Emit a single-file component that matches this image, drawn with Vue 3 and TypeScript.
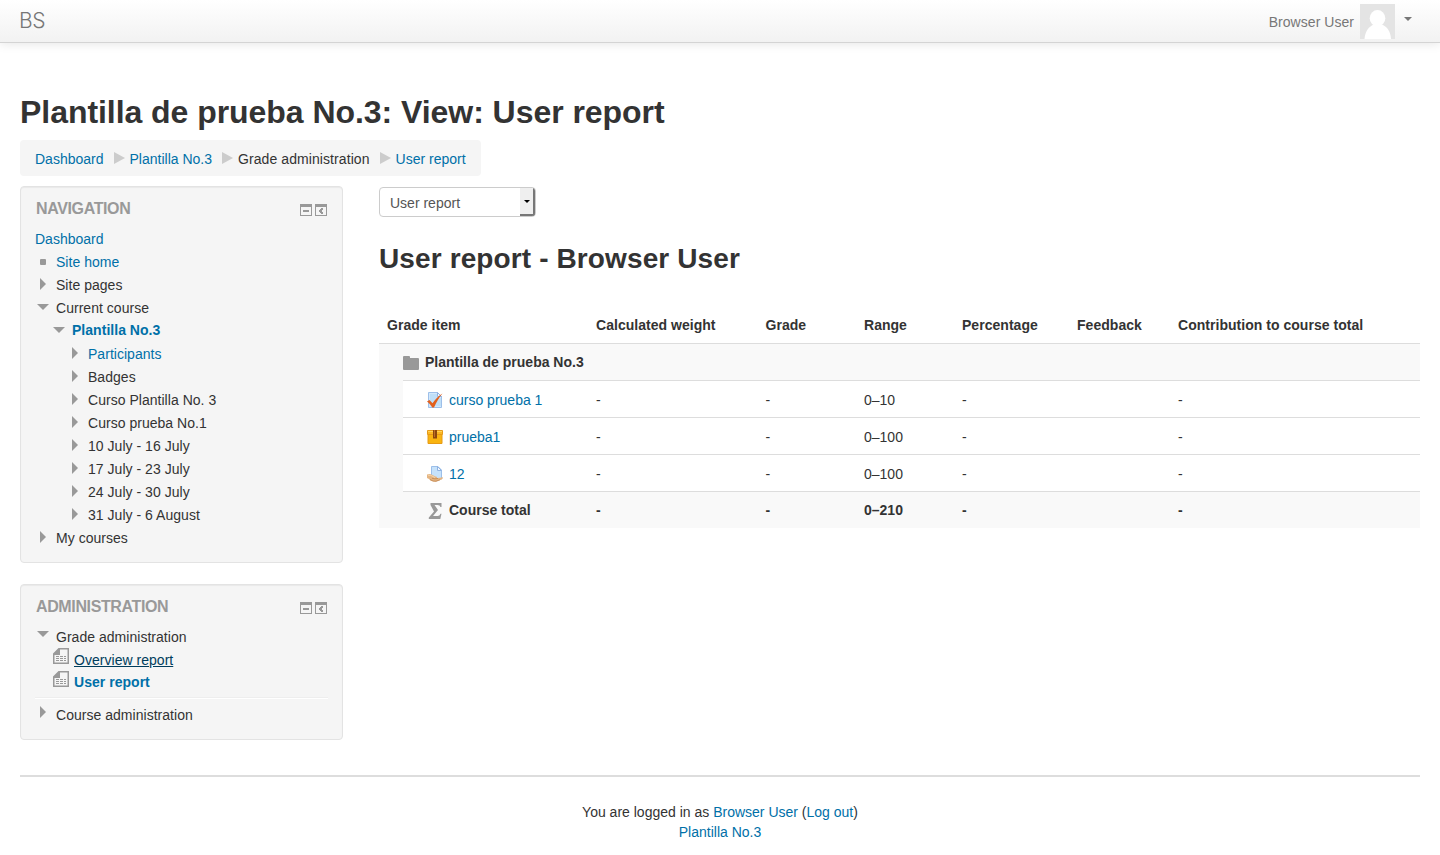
<script setup lang="ts">
type Marker = 'square' | 'closed' | 'open'

interface NavItem {
  label: string
  depth: number
  marker: Marker
  link?: boolean
  bold?: boolean
}

interface GradeRow {
  label: string
  icon: 'quiz' | 'package' | 'assign' | 'sum'
  range: string
  total?: boolean
}

const navItems: NavItem[] = [
  { label: 'Site home', depth: 0, marker: 'square', link: true },
  { label: 'Site pages', depth: 0, marker: 'closed' },
  { label: 'Current course', depth: 0, marker: 'open' },
  { label: 'Plantilla No.3', depth: 1, marker: 'open', link: true, bold: true },
  { label: 'Participants', depth: 2, marker: 'closed', link: true },
  { label: 'Badges', depth: 2, marker: 'closed' },
  { label: 'Curso Plantilla No. 3', depth: 2, marker: 'closed' },
  { label: 'Curso prueba No.1', depth: 2, marker: 'closed' },
  { label: '10 July - 16 July', depth: 2, marker: 'closed' },
  { label: '17 July - 23 July', depth: 2, marker: 'closed' },
  { label: '24 July - 30 July', depth: 2, marker: 'closed' },
  { label: '31 July - 6 August', depth: 2, marker: 'closed' },
  { label: 'My courses', depth: 0, marker: 'closed' },
]

const columns = ['Grade item', 'Calculated weight', 'Grade', 'Range', 'Percentage', 'Feedback', 'Contribution to course total']

const rows: GradeRow[] = [
  { label: 'curso prueba 1', icon: 'quiz', range: '0–10' },
  { label: 'prueba1', icon: 'package', range: '0–100' },
  { label: '12', icon: 'assign', range: '0–100' },
  { label: 'Course total', icon: 'sum', range: '0–210', total: true },
]
</script>

<template>
  <div class="page">
    <header class="navbar">
      <a class="brand">BS</a>
      <div class="user">
        <span class="user-name">Browser User</span>
        <svg class="avatar" width="35" height="35" viewBox="0 0 35 35">
          <rect width="35" height="35" fill="#e4e4e4" />
          <ellipse cx="17.5" cy="14.2" rx="7.8" ry="8.2" fill="#fff" />
          <path d="M4.500 35C5 27 9 22.500 14 20.500h7.500C27 22.500 30.500 27 31 35z" fill="#fff" />
        </svg>
        <i class="caret"></i>
      </div>
    </header>

    <h1>Plantilla de prueba No.3: View: User report</h1>

    <nav class="breadcrumb">
      <a>Dashboard</a><i class="sep"></i><a>Plantilla No.3</a><i class="sep"></i><span class="crumb-text">Grade administration</span><i class="sep"></i><a>User report</a>
    </nav>

    <div class="content">
      <aside>
        <section class="block block-nav">
          <div class="block-head">
            <h2>Navigation</h2>
            <svg width="27" height="12" viewBox="0 0 27 12" shape-rendering="crispEdges">
              <g fill="#999">
                <path d="M0 0h12v12H0zM1 3v8h10V3z" fill-rule="evenodd" />
                <path d="M3 6h6v2H3z" />
                <path d="M15 0h12v12H15zM16 3v8h10V3z" fill-rule="evenodd" />
                <path d="M19 6h1V5h1V4h2v2h-1v2h1v2h-2V9h-1V8h-1z" />
              </g>
            </svg>
          </div>
          <a class="root">Dashboard</a>
          <div v-for="item in navItems" :key="item.label" class="item" :class="['d' + item.depth, { bold: item.bold }]">
            <span class="marker"><i :class="item.marker"></i></span>
            <a v-if="item.link">{{ item.label }}</a>
            <span v-else>{{ item.label }}</span>
          </div>
        </section>

        <section class="block block-admin">
          <div class="block-head">
            <h2>Administration</h2>
            <svg width="27" height="12" viewBox="0 0 27 12" shape-rendering="crispEdges">
              <g fill="#999">
                <path d="M0 0h12v12H0zM1 3v8h10V3z" fill-rule="evenodd" />
                <path d="M3 6h6v2H3z" />
                <path d="M15 0h12v12H15zM16 3v8h10V3z" fill-rule="evenodd" />
                <path d="M19 6h1V5h1V4h2v2h-1v2h1v2h-2V9h-1V8h-1z" />
              </g>
            </svg>
          </div>
          <div class="item d0 raised">
            <span class="marker"><i class="open"></i></span>
            <span>Grade administration</span>
          </div>
          <div v-for="(name, i) in ['Overview report', 'User report']" :key="name" class="item report" :class="{ bold: i === 1 }">
            <svg width="16" height="16" viewBox="0 0 16 16">
              <path d="M5.500 0H16v16H0V5.500zM7 1.500V7H1.500v7.500h13v-13z" fill="#999" fill-rule="evenodd" />
              <path d="M3 8h3v1H3zM7 8h3v1H7zM11 8h2v1h-2zM3 10h3v1H3zM7 10h3v1H7zM11 10h2v1h-2zM3 12h3v1H3zM7 12h3v1H7zM11 12h2v1h-2z" fill="#999" />
            </svg>
            <a :class="{ hovered: i === 0 }">{{ name }}</a>
          </div>
          <hr />
          <div class="item d0 raised">
            <span class="marker"><i class="closed"></i></span>
            <span>Course administration</span>
          </div>
        </section>
      </aside>

      <main>
        <div class="select">
          <span>User report</span>
          <b><i></i></b>
        </div>
        <h2 class="title">User report - Browser User</h2>
        <div class="report-table">
          <div class="tr head">
            <span v-for="col in columns" :key="col">{{ col }}</span>
          </div>
          <div class="tbody">
            <div class="category">
              <svg width="16" height="14" viewBox="0 0 16 14">
                <path d="M0 1Q0 0 1 0h5q1 0 1 1v1h8q1 0 1 1v10q0 1-1 1H1q-1 0-1-1z" fill="#999" />
              </svg>
              <span>Plantilla de prueba No.3</span>
            </div>
            <div v-for="row in rows" :key="row.label" class="tr entry" :class="{ total: row.total }">
              <span class="name">
                <svg v-if="row.icon === 'quiz'" width="16" height="16" viewBox="0 0 16 16">
                  <path d="M1.500.5h9l4 4v11h-13z" fill="#d3e8fb" stroke="#9dbfe9" />
                  <path d="M3 2h7v4h4v8H3z" fill="#bfdff8" />
                  <path d="M10.500.5v4h4z" fill="#f2f8ff" stroke="#8fb2e2" />
                  <path d="M0 9.500 2.500 8l3 3.200C8.500 7 12 3.500 15.500 1.500 12 5.500 9.500 10 7 15.500H5.200C4 13 2 11 0 9.500z" fill="#e2601c" />
                </svg>
                <svg v-else-if="row.icon === 'package'" width="16" height="14" viewBox="0 0 16 14">
                  <path d="M1 4.500h14v9H1z" fill="#f9b410" stroke="#e69a14" />
                  <path d="M.5.5h15v4H.5z" fill="#fbb824" stroke="#e69a18" />
                  <path d="M1 1h14v1H1z" fill="#ffd45a" />
                  <path d="M6 0h4v8.500H6z" fill="#8c480e" />
                  <path d="M7 0h1v7H7z" fill="#bb6f25" />
                </svg>
                <svg v-else-if="row.icon === 'assign'" width="16" height="16" viewBox="0 0 16 16">
                  <path d="M4.500.5h6.500l3.500 3.500v9h-10z" fill="#c6e2fb" stroke="#9cbfe9" />
                  <path d="M10.500.5v4h4z" fill="#f2f8ff" stroke="#8fb2e2" />
                  <path d="M0 8.500Q3 7.500 5.500 9l3 1.500q2 .2 1.500 1.500 3-.2 5.800-.8.5 1.500-1.300 2.200L9 15.700Q4 15.800 2 13L0 12z" fill="#e5b582" />
                  <path d="M1 9.200q3-.3 5 1.300l2 1" stroke="#f5d6ae" fill="none" />
                  <path d="M5 12.300q3 1 6 .2M3 13.500q3 2.200 6 1.700l4-1.400" stroke="#bf8550" stroke-width=".8" fill="none" />
                </svg>
                <svg v-else width="16" height="16" viewBox="0 0 16 16">
                  <path d="M3.500 0h11v4h-1Q13 2 10.500 2H7.500l3.500 5-5 6h4.700q2 0 2.800-2.200h1L13.300 16H1.800v-1.600L7 8.500 3.500 2z" fill="#999" />
                </svg>
                <a v-if="!row.total">{{ row.label }}</a>
                <span v-else class="total-label">{{ row.label }}</span>
              </span>
              <span>-</span>
              <span>-</span>
              <span>{{ row.range }}</span>
              <span>-</span>
              <span></span>
              <span>-</span>
            </div>
          </div>
        </div>
      </main>
    </div>

    <footer>
      <div>You are logged in as <a>Browser User</a> (<a>Log out</a>)</div>
      <div><a>Plantilla No.3</a></div>
    </footer>
  </div>
</template>

<style>
body {
  margin: 0;
  background: #fff;
}
</style>

<style scoped>
.page {
  box-sizing: border-box;
  width: 100%;
  height: 855px;
  overflow: hidden;
  padding: 0 20px;
  color: #333;
  font: 14px/20px "Liberation Sans", Arial, sans-serif;
}
.page * {
  box-sizing: border-box;
}
a {
  color: #0070a8;
}
h1,
h2 {
  margin: 0;
}
.navbar {
  display: flex;
  justify-content: space-between;
  height: 43px;
  margin: 0 -20px;
  padding: 0 28px 0 19px;
  border-bottom: 1px solid #d4d4d4;
  background: linear-gradient(#fff, #f2f2f2);
  box-shadow: 0 1px 10px rgba(0, 0, 0, 0.1);
}
.brand {
  color: #777;
  font: 300 21px/41px Inter, "Liberation Sans", sans-serif;
  letter-spacing: -0.5px;
}
.user {
  display: flex;
  color: #777;
}
.user-name {
  line-height: 44px;
  letter-spacing: 0.04px;
}
.avatar {
  margin: 4px 9px 0 6px;
}
.caret {
  width: 0;
  height: 0;
  margin-top: 17px;
  border: 4px solid transparent;
  border-top-color: #777;
  border-bottom: 0;
}
h1 {
  margin-top: 49px;
  height: 40px;
  font-size: 32px;
  line-height: 40px;
  letter-spacing: -0.05px;
  white-space: nowrap;
}
.breadcrumb {
  display: flex;
  align-items: center;
  width: 461px;
  height: 36px;
  margin-top: 8px;
  padding: 0 15px;
  border-radius: 4px;
  background: #f5f5f5;
  white-space: nowrap;
}
.breadcrumb a,
.breadcrumb span {
  padding-top: 2px;
}
.crumb-text {
  letter-spacing: 0.08px;
}
.sep {
  width: 0;
  height: 0;
  margin: 0 5px 0 10px;
  border: 6px solid transparent;
  border-left: 11px solid #ccc;
  border-right: 0;
}
.content {
  display: flex;
  gap: 36px;
  margin-top: 10px;
}
aside {
  width: 323px;
}
.block {
  padding: 10px 14px;
  border: 1px solid #e3e3e3;
  border-radius: 4px;
  background: #f5f5f5;
  box-shadow: inset 0 1px 1px rgba(0, 0, 0, 0.05);
}
.block-nav {
  height: 377px;
}
.block-admin {
  height: 156px;
  margin-top: 21px;
}
.block-head {
  display: flex;
  justify-content: space-between;
  height: 31px;
  padding: 0 1px;
}
.block-head h2 {
  color: #999;
  font-size: 16px;
  line-height: 24px;
  letter-spacing: -0.37px;
  text-transform: uppercase;
}
.block-head svg {
  margin-top: 7px;
}
.root,
.item {
  height: 23px;
  line-height: 23px;
}
.root {
  display: block;
}
.item {
  display: flex;
  letter-spacing: 0.03px;
  white-space: nowrap;
}
.bold {
  font-weight: bold;
  line-height: 21px;
}
.d1 {
  padding-left: 16px;
}
.d2 {
  padding-left: 32px;
}
.marker {
  display: flex;
  justify-content: center;
  width: 16px;
  margin-right: 5px;
}
.square {
  width: 6px;
  height: 6px;
  margin-top: 8px;
  border-radius: 1px;
  background: #999;
}
.closed {
  width: 0;
  height: 0;
  margin-top: 4px;
  border: 6px solid transparent;
  border-left-color: #999;
  border-right: 0;
}
.open {
  width: 0;
  height: 0;
  margin-top: 7px;
  border: 6px solid transparent;
  border-top-color: #999;
  border-bottom: 0;
}
.raised .open {
  margin-top: 5px;
}
.raised .closed {
  margin-top: 2px;
}
.report {
  padding-left: 18px;
}
.report svg {
  margin: -1px 5px 0 0;
}
.hovered {
  color: #003d5c;
  text-decoration: underline;
}
hr {
  height: 2px;
  margin: 2px 0 5px;
  border: 0;
  border-top: 1px solid #eee;
  border-bottom: 1px solid #fff;
}
main {
  width: 1041px;
}
.select {
  display: flex;
  justify-content: space-between;
  width: 157px;
  height: 30px;
  margin-top: 1px;
  border: 1px solid #ccc;
  border-radius: 4px;
  overflow: hidden;
  color: #555;
  line-height: 30px;
}
.select span {
  margin-left: 10px;
}
.select b {
  width: 15px;
  border-right: 2px solid #777;
  border-bottom: 2px solid #777;
  background: #efefef;
}
.select i {
  display: block;
  width: 0;
  height: 0;
  margin: 12px 0 0 4px;
  border: 3.5px solid transparent;
  border-top-color: #000;
  border-bottom: 0;
}
.title {
  height: 40px;
  margin-top: 21px;
  font-size: 28px;
  line-height: 42px;
  letter-spacing: 0.12px;
  white-space: nowrap;
}
.report-table {
  margin-top: 29px;
}
.tr {
  display: grid;
  grid-template-columns: 209px 169.5px 98.5px 98px 115px 101px 250px;
  line-height: 37px;
  white-space: nowrap;
}
.tr > span {
  padding-left: 8px;
}
.head {
  height: 36px;
  font-weight: bold;
  letter-spacing: 0.03px;
}
.tbody {
  height: 185px;
  padding-left: 24px;
  border-top: 1px solid #ddd;
  background: #f9f9f9;
}
.category {
  display: flex;
  height: 36px;
  font-weight: bold;
  line-height: 36px;
}
.category svg {
  margin: 12px 6px 0 0;
}
.entry {
  grid-template-columns: 185px 169.5px 98.5px 98px 115px 101px 250px;
  height: 37px;
  border-top: 1px solid #ddd;
  background: #fff;
  line-height: 38px;
}
.entry > .name {
  display: flex;
  height: 38px;
  align-items: center;
  padding-left: 24px;
}
.name svg {
  margin-right: 6px;
}
.total {
  background: #f9f9f9;
  font-weight: bold;
  line-height: 36px;
}
.total-label {
  padding-bottom: 2px;
}
footer {
  margin-top: 35px;
  padding-top: 25px;
  border-top: 2px solid #ddd;
  text-align: center;
}
</style>
